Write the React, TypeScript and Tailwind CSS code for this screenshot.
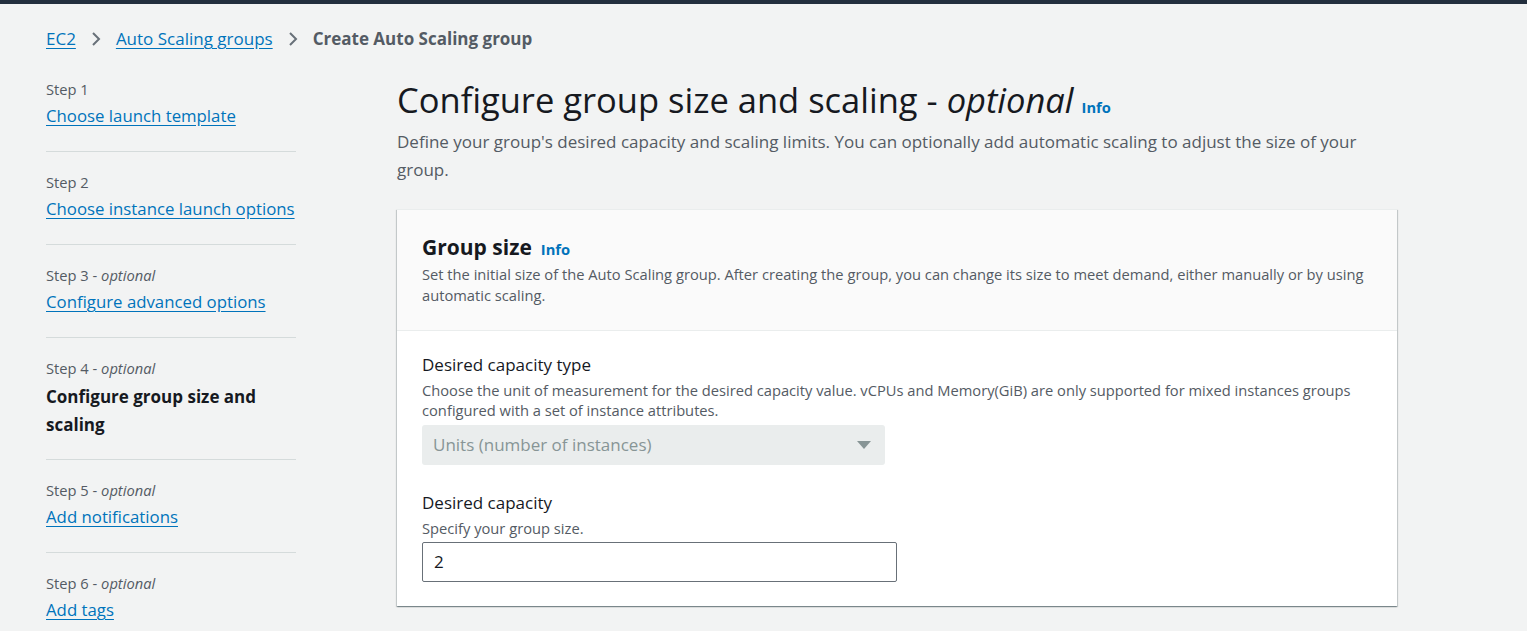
import React from 'react'

const steps = [
    { label: 'Step 1', optional: false, title: 'Choose launch template', current: false },
    { label: 'Step 2', optional: false, title: 'Choose instance launch options', current: false },
    { label: 'Step 3', optional: true, title: 'Configure advanced options', current: false },
    { label: 'Step 4', optional: true, title: 'Configure group size and scaling', current: true },
    { label: 'Step 5', optional: true, title: 'Add notifications', current: false },
    { label: 'Step 6', optional: true, title: 'Add tags', current: false },
]

const Chevron = () => (
    <svg width="16" height="16" viewBox="0 0 16 16" className="mx-[12px] shrink-0">
        <path d="M5 2l6 6-6 6" fill="none" stroke="#687078" strokeWidth="2" />
    </svg>
)

const App = () => {
    return (
        <div className="min-h-[631px] bg-[#f2f3f3] text-[#16191f] font-['Open_Sans',sans-serif] overflow-hidden">
            <div className="h-[4px] bg-[#232f3e]" />

            <nav className="flex items-center pl-[46px] pt-[21px] h-[49px] text-[17px]">
                <a className="text-[#0073bb] underline underline-offset-[3px]">EC2</a>
                <Chevron />
                <a className="text-[#0073bb] underline underline-offset-[3px]">Auto Scaling groups</a>
                <Chevron />
                <span className="font-bold text-[#545b64]">Create Auto Scaling group</span>
            </nav>

            <div className="flex pl-[46px] pt-[26px]">
                <aside className="w-[250px] shrink-0">
                    {steps.map((s, i) => (
                        <div
                            key={s.label}
                            className={
                                (i > 0 ? 'border-t border-[#d5dbdb] pt-[20px] ' : '') +
                                (s.current ? 'pb-[20px]' : 'pb-[24px]')
                            }
                        >
                            <p className="text-[14.7px] leading-[20px] text-[#545b64]">
                                {s.label}
                                {s.optional && <> - <i>optional</i></>}
                            </p>
                            {s.current ? (
                                <p className="mt-[5px] text-[17px] leading-[28px] font-bold">{s.title}</p>
                            ) : (
                                <a className="block mt-[6px] whitespace-nowrap text-[16.8px] leading-[22px] text-[#0073bb] underline underline-offset-[3px]">
                                    {s.title}
                                </a>
                            )}
                        </div>
                    ))}
                </aside>

                <main className="ml-[101px] w-[1000px] shrink-0 -mt-[2px]">
                    <div className="flex items-baseline gap-[8px]">
                        <h1 className="text-[34.5px] leading-[46px] font-normal">
                            Configure group size and scaling - <i>optional</i>
                        </h1>
                        <a className="text-[14.7px] font-bold text-[#0073bb]">Info</a>
                    </div>
                    <p className="mt-[5px] text-[17px] leading-[28px] text-[#545b64] pr-[30px]">
                        Define your group's desired capacity and scaling limits. You can optionally add automatic scaling to adjust the size of your group.
                    </p>

                    <section className="mt-[25px] bg-white border-t border-[#eaeded] shadow-[0_1px_1px_0_rgba(0,28,36,0.3),1px_1px_1px_0_rgba(0,28,36,0.15),-1px_1px_1px_0_rgba(0,28,36,0.15)]">
                        <header className="bg-[#fafafa] border-b border-[#eaeded] px-[25px] pt-[22px] pb-[24px]">
                            <div className="flex items-baseline gap-[9px]">
                                <h2 className="text-[21px] leading-[30px] font-bold">Group size</h2>
                                <a className="text-[14.7px] font-bold text-[#0073bb]">Info</a>
                            </div>
                            <p className="mt-[2px] text-[14.7px] leading-[21px] text-[#545b64]">
                                Set the initial size of the Auto Scaling group. After creating the group, you can change its size to meet demand, either manually or by using automatic scaling.
                            </p>
                        </header>

                        <div className="px-[25px] pt-[19px] pb-[24px]">
                            <p className="text-[17px] leading-[30px]">Desired capacity type</p>
                            <p className="text-[14.7px] leading-[20px] text-[#545b64]">
                                Choose the unit of measurement for the desired capacity value. vCPUs and Memory(GiB) are only supported for mixed instances groups configured with a set of instance attributes.
                            </p>
                            <div className="mt-[5px] w-[463px] h-[40px] rounded-[3px] bg-[#eaeded] flex items-center justify-between pl-[11px] pr-[14px]">
                                <span className="text-[17px] text-[#879596]">Units (number of instances)</span>
                                <svg width="14" height="10" viewBox="0 0 14 10">
                                    <path d="M0 1h14L7 9z" fill="#879596" />
                                </svg>
                            </div>

                            <p className="mt-[23px] text-[17px] leading-[30px]">Desired capacity</p>
                            <p className="text-[14.7px] leading-[20px] text-[#545b64]">Specify your group size.</p>
                            <div className="mt-[4px] w-[475px] h-[40px] rounded-[2px] border border-[#687078] bg-white flex items-center pl-[11px]">
                                <span className="text-[17px]">2</span>
                            </div>
                        </div>
                    </section>
                </main>
            </div>
        </div>
    )
}

export default App
